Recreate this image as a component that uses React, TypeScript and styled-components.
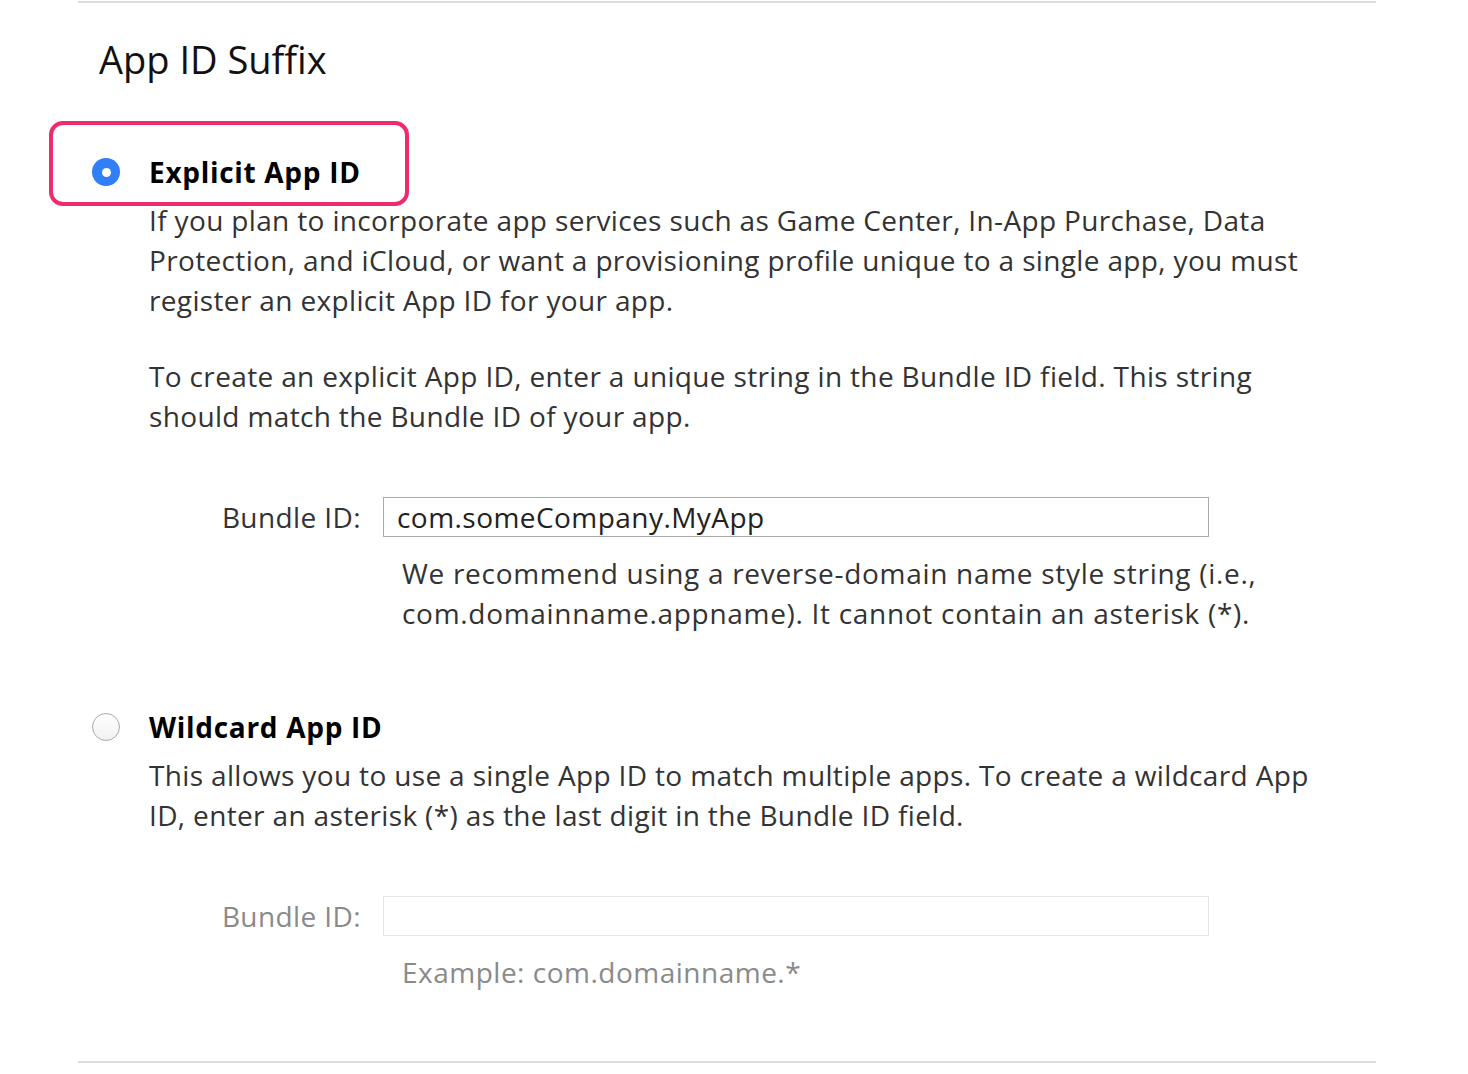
import React from "react";
import styled, { createGlobalStyle } from "styled-components";

const GlobalStyle = createGlobalStyle`
  html, body {
    margin: 0;
    padding: 0;
    background: #ffffff;
  }
  body {
    font-family: "Open Sans", "Noto Sans", "Liberation Sans", sans-serif;
    color: #333333;
    -webkit-font-smoothing: antialiased;
  }
`;

const Page = styled.div`
  padding: 1px 92px 0 78px;
`;

const Section = styled.section`
  border-top: 2px solid #dddddd;
  border-bottom: 2px solid #dddddd;
  padding-bottom: 69px;
`;

const Title = styled.h2`
  margin: 32px 0 0 21px;
  font-size: 38px;
  line-height: 48px;
  font-weight: 400;
  color: #111111;
`;

const Option = styled.div<{ $first?: boolean }>`
  margin-top: ${(p) => (p.$first ? "69px" : "74px")};
`;

const OptionHeader = styled.label`
  position: relative;
  display: flex;
  align-items: center;
  gap: 29px;
  padding-left: 14px;
  height: 40px;
  font-size: 28px;
  font-weight: 700;
  letter-spacing: 0.7px;
  color: #000000;
`;

const Highlight = styled.span`
  position: absolute;
  left: -29px;
  top: -31px;
  width: 352px;
  height: 77px;
  border: 4px solid #ef2b6d;
  border-radius: 14px;
  pointer-events: none;
`;

const Radio = styled.span<{ $checked?: boolean }>`
  box-sizing: border-box;
  width: 28px;
  height: 28px;
  border-radius: 50%;
  flex-shrink: 0;
  display: flex;
  align-items: center;
  justify-content: center;
  background: ${(p) =>
    p.$checked ? "#2f80f6" : "linear-gradient(#ffffff, #f2f2f2)"};
  border: ${(p) => (p.$checked ? "none" : "1.5px solid #a9a9a9")};

  &::after {
    content: "";
    display: ${(p) => (p.$checked ? "block" : "none")};
    width: 9px;
    height: 9px;
    border-radius: 50%;
    background: #ffffff;
  }
`;

const Body = styled.div`
  padding-left: 71px;
`;

const Paragraph = styled.p<{ $gap?: number }>`
  margin: ${(p) => p.$gap ?? 8}px 0 0;
  font-size: 28px;
  line-height: 40px;
  letter-spacing: 0.35px;
  color: #333333;
`;

const FieldRow = styled.div`
  display: grid;
  grid-template-columns: 212px 826px;
  column-gap: 22px;
  align-items: center;
  margin-top: 61px;
`;

const FieldLabel = styled.span<{ $disabled?: boolean }>`
  text-align: right;
  font-size: 28px;
  letter-spacing: 0.4px;
  color: ${(p) => (p.$disabled ? "#8a8a8a" : "#333333")};
`;

const TextInput = styled.input<{ $disabled?: boolean }>`
  box-sizing: border-box;
  width: 100%;
  height: 40px;
  margin: 0;
  padding: 0 13px;
  border: 1px solid ${(p) => (p.$disabled ? "#e6e6e6" : "#aaaaaa")};
  border-radius: 0;
  font-family: inherit;
  font-size: 28px;
  letter-spacing: 0.45px;
  color: #222222;
  background: #ffffff;
  outline: none;
`;

const Hint = styled.p<{ $muted?: boolean }>`
  margin: 16px 0 0 253px;
  font-size: 28px;
  line-height: 40px;
  letter-spacing: ${(p) => (p.$muted ? "0.5px" : "0.7px")};
  color: ${(p) => (p.$muted ? "#8a8a8a" : "#333333")};
`;

export default function App() {
  return (
    <>
      <GlobalStyle />
      <Page>
        <Section>
          <Title>App ID Suffix</Title>

          <Option $first>
            <OptionHeader>
              <Highlight />
              <Radio $checked />
              Explicit App ID
            </OptionHeader>
            <Body>
              <Paragraph>
                If you plan to incorporate app services such as Game Center, In-App Purchase, Data
                <br />
                Protection, and iCloud, or want a provisioning profile unique to a single app, you must
                <br />
                register an explicit App ID for your app.
              </Paragraph>
              <Paragraph $gap={36}>
                To create an explicit App ID, enter a unique string in the Bundle ID field. This string
                <br />
                should match the Bundle ID of your app.
              </Paragraph>
              <FieldRow>
                <FieldLabel>Bundle ID:</FieldLabel>
                <TextInput defaultValue="com.someCompany.MyApp" />
              </FieldRow>
              <Hint>
                We recommend using a reverse-domain name style string (i.e.,
                <br />
                com.domainname.appname). It cannot contain an asterisk (*).
              </Hint>
            </Body>
          </Option>

          <Option>
            <OptionHeader>
              <Radio />
              Wildcard App ID
            </OptionHeader>
            <Body>
              <Paragraph>
                This allows you to use a single App ID to match multiple apps. To create a wildcard App
                <br />
                ID, enter an asterisk (*) as the last digit in the Bundle ID field.
              </Paragraph>
              <FieldRow>
                <FieldLabel $disabled>Bundle ID:</FieldLabel>
                <TextInput $disabled disabled />
              </FieldRow>
              <Hint $muted>Example: com.domainname.*</Hint>
            </Body>
          </Option>
        </Section>
      </Page>
    </>
  );
}
